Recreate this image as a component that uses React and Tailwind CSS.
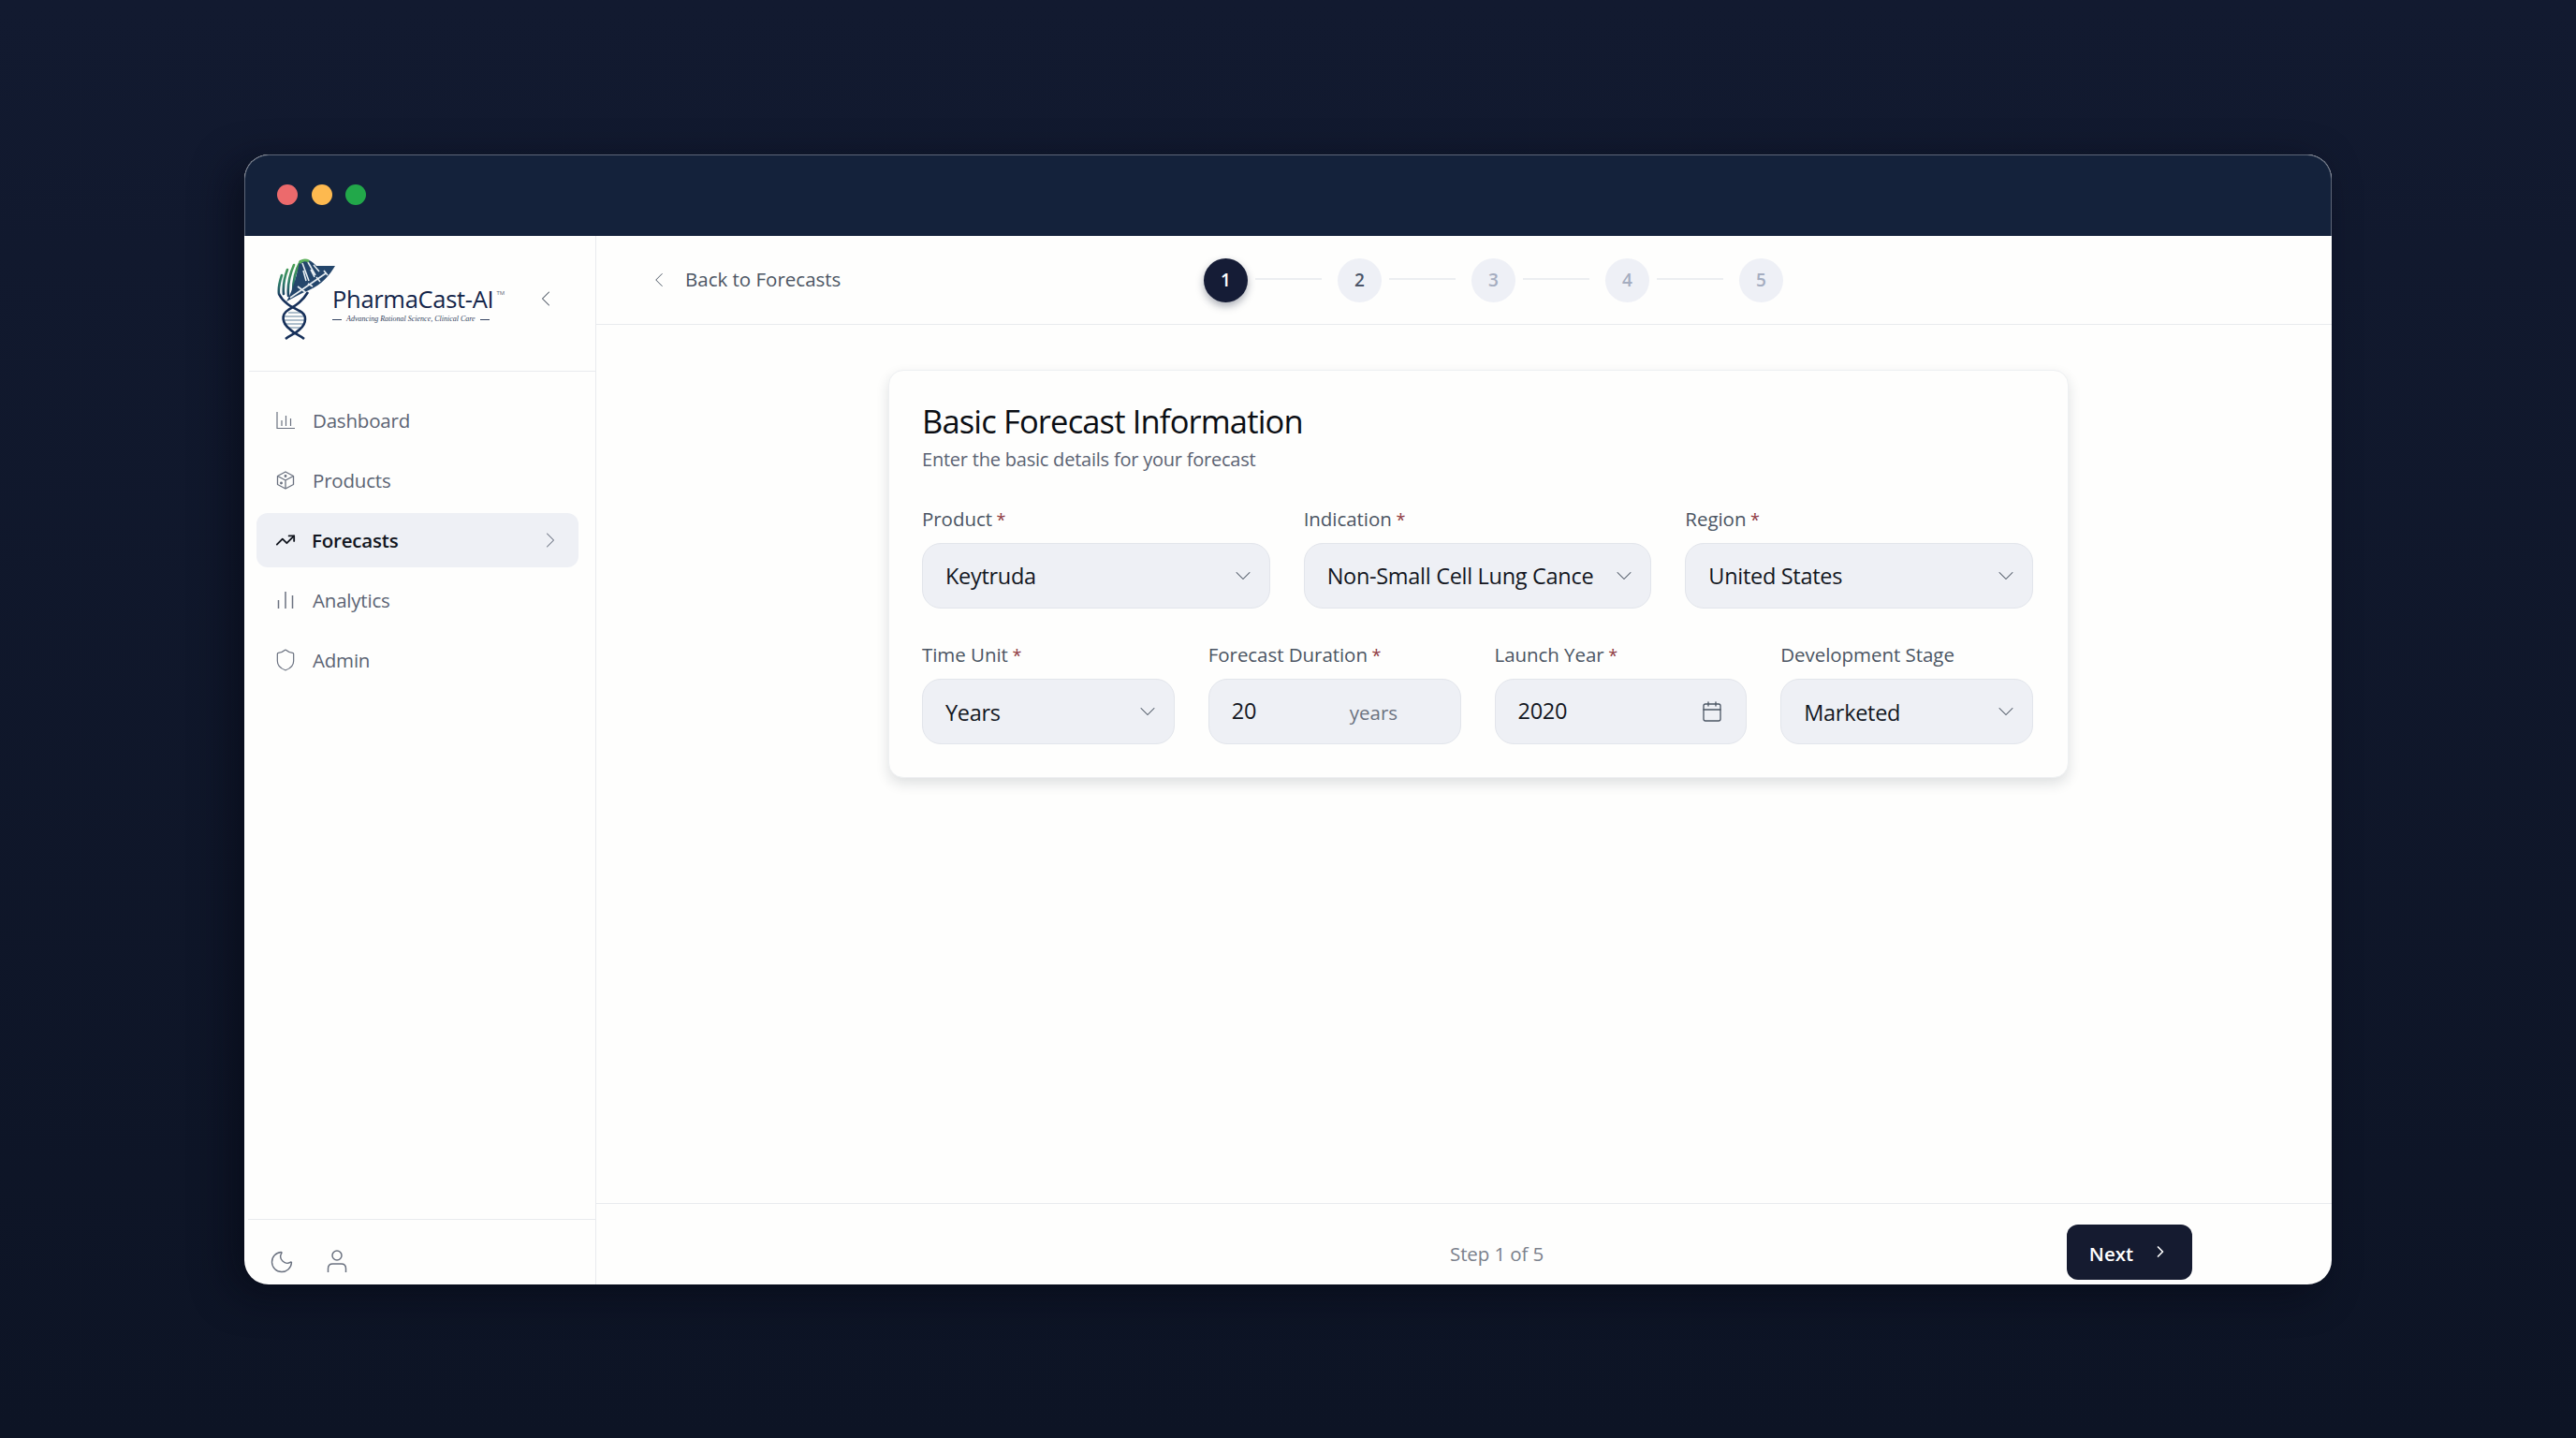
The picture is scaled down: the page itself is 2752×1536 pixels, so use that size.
import React from "react";
import { ChevronDown, ChevronLeft, ChevronRight, Calendar, Shield, Moon, TrendingUp } from "lucide-react";

function LogoMark() {
  return (
    <svg width="62" height="88" viewBox="0 0 62 88" fill="none" className="shrink-0">
      <defs>
        <linearGradient id="lf" x1="0" y1="0" x2="0" y2="1">
          <stop offset="0" stopColor="#4fa64f" />
          <stop offset="0.6" stopColor="#2f7f6a" />
          <stop offset="1" stopColor="#1c3f63" />
        </linearGradient>
      </defs>
      <path d="M8 62h20M6 66h24M7 70h22M11 74h14M12 58h13" stroke="#aebfcc" strokeWidth="2" />
      <path d="M9 86C14 82 19 81 24 76C32 69 32 60 24 56C16 52 7 48 2 38" stroke="#16305a" strokeWidth="2.6" />
      <path d="M29 86C24 82 19 81 14 76C5 69 4 60 12 55C20 50 27 46 33 36" stroke="#16305a" strokeWidth="2.6" />
      <path d="M2 38C1 30 3 24 5 18M7 38C6 28 8 20 11 12M12 40C11 28 14 16 18 7M17 36C17 24 20 12 25 3" stroke="url(#lf)" strokeWidth="2.6" strokeLinecap="round" />
      <path d="M24 3C29 -1 36 1 42 8L62 8C56 18 48 28 34 34C24 38 18 42 10 46C15 38 20 24 24 3Z" fill="#24466b" />
      <path d="M27 5L34 24M33 4L41 18M39 7L45 14M14 42L52 16M22 30L30 36M33 27L38 30M42 20L46 25M50 13L54 18M28 13L31 24M36 12L40 20" stroke="#e8eef2" strokeWidth="1.6" />
      <path d="M24 5C26 2 30 1 34 3" stroke="#5fb35c" strokeWidth="2.8" />
    </svg>
  );
}

function DashIcon() {
  return (
    <svg width="20" height="20" viewBox="0 0 20 20" fill="none" stroke="#6b7280" strokeWidth="1.2" className="shrink-0">
      <path d="M1 1V18.500H20" />
      <path d="M6 10V16M10.500 5V16M15.500 8V16" />
    </svg>
  );
}
function BoxIcon() {
  return (
    <svg width="20" height="20" viewBox="0 0 20 20" fill="none" stroke="#6b7280" strokeWidth="1.3" strokeLinejoin="round" className="shrink-0">
      <path d="M10 1L18.500 5.500V14.500L10 19L1.500 14.500V5.500Z" />
      <path d="M1.500 5.500L10 10L18.500 5.500M10 10V19" />
      <circle cx="10" cy="5.500" r="0.8" fill="#6b7280" />
      <circle cx="5.500" cy="13" r="0.8" fill="#6b7280" />
    </svg>
  );
}
function BarsIcon() {
  return (
    <svg width="20" height="20" viewBox="0 0 20 20" fill="none" stroke="#6b7280" strokeWidth="1.5" className="shrink-0">
      <path d="M2.500 19V10M10 19V1M17.500 19V5" />
    </svg>
  );
}
function UserIcon() {
  return (
    <svg width="22" height="24" viewBox="0 0 22 24" fill="none" stroke="#6b7280" strokeWidth="1.5" className="shrink-0">
      <circle cx="11" cy="6" r="5" />
      <path d="M1.500 24V20C1.500 17 3.500 15 6.500 15H15.500C18.500 15 20.500 17 20.500 20V24" />
    </svg>
  );
}

function NavItem({ icon, label, active }) {
  return (
    <div className={active
      ? "flex items-center h-[58px] rounded-[12px] bg-[#eef0f5] pl-[20px] pr-[16px]"
      : "flex items-center h-[58px] rounded-[12px] pl-[21px] pr-[26px]"}>
      <span className="w-[39px] flex items-center justify-start">{icon}</span>
      <span className={active
        ? "text-[20.500px] tracking-[-0.2px] font-semibold text-[#12161f]"
        : "text-[20.500px] tracking-[-0.2px] text-[#5b6373]"}>{label}</span>
      {active && <ChevronRight size={28} strokeWidth={0.9} className="ml-auto text-[#6b7280]" />}
    </div>
  );
}

function Label({ text, required }) {
  return (
    <div className="h-[28px] leading-[25px] mb-[10px] text-[20.500px] tracking-[-0.05px] text-[#4b5563] whitespace-nowrap">
      {text}
      {required && <span className="text-[18px] text-[#8f3a42]"> *</span>}
    </div>
  );
}

function Select({ label, value, required = true, low }) {
  return (
    <div className="min-w-0">
      <Label text={label} required={required} />
      <div className="flex items-center h-[70px] rounded-[20px] bg-[#eef0f5] border border-[#e2e5eb] pl-[24px] pr-[14px]">
        <span className={low
          ? "flex-1 min-w-0 whitespace-nowrap text-[23.500px] tracking-[-0.3px] text-[#13171f] mt-[4px]"
          : "flex-1 min-w-0 whitespace-nowrap text-[23.500px] tracking-[-0.3px] text-[#13171f] mt-[1px]"}>{value}</span>
        <ChevronDown size={28} strokeWidth={0.9} className="shrink-0 text-[#4b5563]" />
      </div>
    </div>
  );
}

function Step({ n, state, line }) {
  const cls = state === "active"
    ? "bg-[#151c36] text-white shadow-[0_4px_8px_rgba(20,28,54,0.35)]"
    : state === "next"
      ? "bg-[#eef0f6] text-[#4b5568]"
      : "bg-[#eef0f6] text-[#a5adc0]";
  return (
    <div className="flex items-center">
      <div className={`w-[47px] h-[47px] rounded-full flex items-center justify-center text-[19px] font-semibold ${cls}`}>{n}</div>
      {line && <div className="w-[71px] h-[2px] bg-[#eceef1] ml-[8px] mr-[17px] -mt-[2px]" />}
    </div>
  );
}

export default function App() {
  return (
    <div className="w-[2752px] h-[1536px] pl-[261px] pt-[165px] overflow-hidden bg-gradient-to-b from-[#121a30] to-[#0d1425] font-['Open_Sans','Noto_Sans',sans-serif]">
      <div className="w-[2230px] h-[1207px] rounded-[26px] overflow-hidden flex flex-col bg-[#fefefd] shadow-[-14px_10px_40px_rgba(5,8,18,0.55)]">
        <div className="h-[87px] shrink-0 bg-[#14223b] border-t border-x border-[#5d6678] rounded-t-[26px] flex items-center gap-[14.500px] pl-[34px] pb-[2px]">
          <span className="w-[22px] h-[22px] rounded-full bg-[#ec6a6c]" />
          <span className="w-[22px] h-[22px] rounded-full bg-[#fdb94f]" />
          <span className="w-[22px] h-[22px] rounded-full bg-[#22a84a]" />
        </div>
        <div className="flex flex-1 min-h-0">
          <aside className="w-[376px] shrink-0 border-r border-[#e9ebee] flex flex-col">
            <div className="h-[145px] shrink-0 ml-[5px] border-b border-[#e9ebee] flex items-start pl-[30px] pt-[24px]">
              <LogoMark />
              <div className="mt-[26px] -ml-[3px] w-[178px]">
                <div className="flex items-start text-[#14254a] h-[34px]">
                  <span className="text-[25.500px] leading-[34px] font-medium whitespace-nowrap tracking-[-0.3px]">PharmaCast-AI</span>
                  <span className="text-[6px] leading-[6px] mt-[8px] ml-[3px] text-[#5b6373]">TM</span>
                </div>
                <div className="flex items-center gap-[5px] -mt-[1px]">
                  <span className="w-[10px] h-px bg-[#334360] shrink-0" />
                  <span className="font-['Liberation_Serif',serif] italic text-[8px] leading-[12px] text-[#334360] whitespace-nowrap">Advancing Rational Science, Clinical Care</span>
                  <span className="w-[10px] h-px bg-[#334360] shrink-0" />
                </div>
              </div>
              <ChevronLeft size={28} strokeWidth={0.9} className="ml-auto mr-[39px] mt-[29px] text-[#4b5563]" />
            </div>
            <nav className="flex flex-col gap-[6px] pt-[23px] pl-[13px] pr-[18px]">
              <NavItem icon={<DashIcon />} label="Dashboard" />
              <NavItem icon={<BoxIcon />} label="Products" />
              <NavItem active icon={<TrendingUp size={22} strokeWidth={2} className="text-[#12161f]" />} label="Forecasts" />
              <NavItem icon={<BarsIcon />} label="Analytics" />
              <NavItem icon={<Shield size={26} strokeWidth={1.1} className="-ml-[3px] text-[#6b7280]" />} label="Admin" />
            </nav>
            <div className="mt-auto h-[70px] ml-[4px] border-t border-[#e9ebee] flex items-start pt-[31px] pl-[22px]">
              <Moon size={28} strokeWidth={1.2} className="text-[#6b7280]" />
              <span className="ml-[34px] mt-[1px]"><UserIcon /></span>
            </div>
          </aside>
          <main className="flex-1 min-w-0 flex flex-col">
            <div className="h-[95px] shrink-0 border-b border-[#e9ebee] flex items-center pl-[54px]">
              <div className="w-[595px] shrink-0 flex items-center">
                <ChevronLeft size={26} strokeWidth={0.9} className="text-[#4b5563]" />
                <span className="ml-[15px] -mt-[1px] text-[20.500px] text-[#4b5563]">Back to Forecasts</span>
              </div>
              <div className="flex items-center">
                <Step n={1} state="active" line />
                <Step n={2} state="next" line />
                <Step n={3} line />
                <Step n={4} line />
                <Step n={5} />
              </div>
            </div>
            <div className="flex-1 min-h-0 pt-[48px] pl-[312px]">
              <section className="w-[1261px] h-[436px] rounded-[16px] border border-[#eef0f2] bg-[#fefefd] shadow-[0_6px_14px_rgba(30,40,60,0.14)] pl-[35px] pr-[37px] pt-[32px]">
                <h1 className="text-[34.500px] leading-[44px] font-medium tracking-[-0.85px] text-[#0b0e14]">Basic Forecast Information</h1>
                <p className="mt-[5px] text-[20px] leading-[28px] tracking-[-0.22px] text-[#5b6373]">Enter the basic details for your forecast</p>
                <div className="grid grid-cols-3 gap-x-[36px] mt-[37px]">
                  <Select label="Product" value="Keytruda" />
                  <Select label="Indication" value="Non-Small Cell Lung Cance" />
                  <Select label="Region" value="United States" />
                </div>
                <div className="grid grid-cols-4 gap-x-[36px] mt-[37px]">
                  <Select label="Time Unit" value="Years" low />
                  <div>
                    <Label text="Forecast Duration" required />
                    <div className="flex items-center h-[70px] rounded-[20px] bg-[#eef0f5] border border-[#e2e5eb] pl-[24px]">
                      <span className="w-[126px] text-[23.500px] tracking-[-0.3px] text-[#13171f]">20</span>
                      <span className="text-[20.500px] text-[#6b7280] mt-[3px]">years</span>
                    </div>
                  </div>
                  <div>
                    <Label text="Launch Year" required />
                    <div className="flex items-center h-[70px] rounded-[20px] bg-[#eef0f5] border border-[#e2e5eb] pl-[24px] pr-[24px]">
                      <span className="flex-1 text-[23.500px] tracking-[-0.3px] text-[#13171f]">2020</span>
                      <Calendar size={24} strokeWidth={1.3} className="text-[#4b5563]" />
                    </div>
                  </div>
                  <Select label="Development Stage" value="Marketed" required={false} low />
                </div>
              </section>
            </div>
            <div className="h-[87px] shrink-0 border-t border-[#e9ebee] flex items-start pl-[912px] pr-[149px]">
              <span className="mt-[39px] text-[20.500px] leading-[28px] tracking-[-0.1px] text-[#7b818c]">Step 1 of 5</span>
              <button className="ml-auto mt-[22px] w-[134px] h-[59px] rounded-[12px] bg-[#151b30] flex items-center justify-center gap-[19px] text-white text-[20.500px] font-semibold">
                <span className="mt-[3px]">Next</span>
                <ChevronRight size={20} strokeWidth={2} className="-mt-[2px]" />
              </button>
            </div>
          </main>
        </div>
      </div>
    </div>
  );
}
